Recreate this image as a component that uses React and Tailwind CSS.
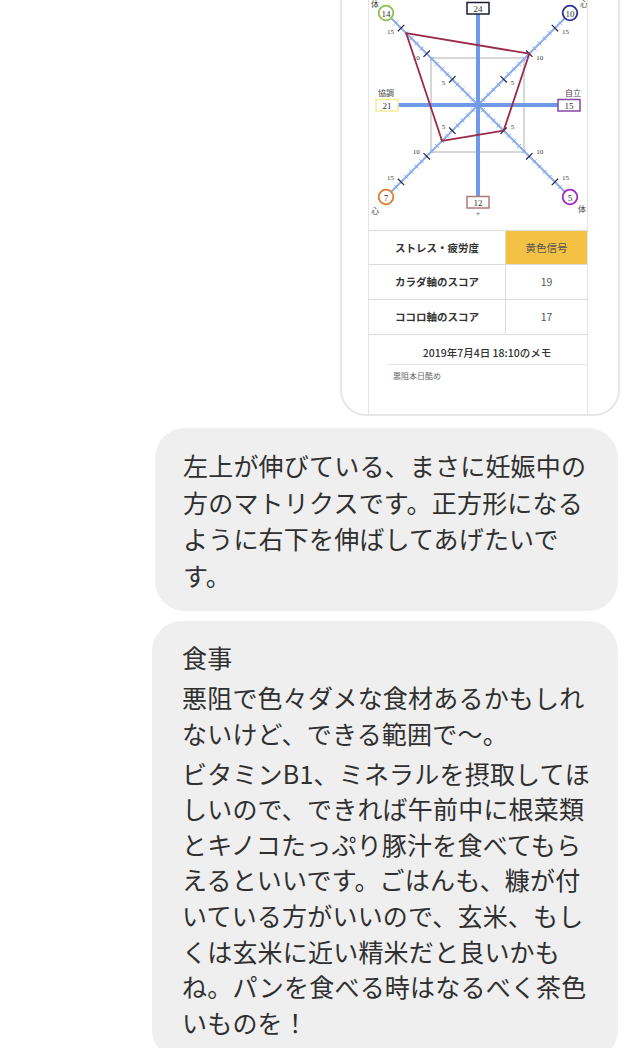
import React from 'react';

const CX = 478;
const CY = 105;
const U = 5.13;

const diagonals = [
  { sx: -1, sy: -1, circle: { x: 386, y: 13, value: '14', color: '#8cc04a' } },
  { sx: 1, sy: -1, circle: { x: 570, y: 13, value: '10', color: '#2f3190' } },
  { sx: -1, sy: 1, circle: { x: 386, y: 197, value: '7', color: '#df7d2c' } },
  { sx: 1, sy: 1, circle: { x: 570, y: 197, value: '5', color: '#a327bf' } },
];

const scores = [
  { sx: -1, sy: -1, v: 14 },
  { sx: 1, sy: -1, v: 10 },
  { sx: 1, sy: 1, v: 5 },
  { sx: -1, sy: 1, v: 7 },
];

function Axis({ sx, sy, circle }) {
  const k = Math.SQRT1_2;
  const px = -sy * k;
  const py = sx * k;
  const endX = circle.x - sx * 5.5;
  const endY = circle.y - sy * 5.5;
  const ticks = [];
  for (let i = 1; i <= 17; i++) {
    const x = CX + sx * i * U;
    const y = CY + sy * i * U;
    const major = i % 5 === 0;
    const h = major ? 4.5 : 2.8;
    ticks.push(
      <line
        key={i}
        x1={x - px * h}
        y1={y - py * h}
        x2={x + px * h}
        y2={y + py * h}
        stroke={major ? '#1f2340' : '#88aaee'}
        strokeWidth={major ? 1.2 : 1}
      />
    );
    if (major) {
      ticks.push(
        <text
          key={'l' + i}
          x={x + sx * 7}
          y={y - sy * 4}
          fontSize="7"
          fill="#333"
          textAnchor={sx < 0 ? 'end' : 'start'}
          dominantBaseline="central"
        >
          {i}
        </text>
      );
    }
  }
  return (
    <g>
      <line x1={CX} y1={CY} x2={endX} y2={endY} stroke="#8cadee" strokeWidth="2" />
      {ticks}
      <circle cx={circle.x} cy={circle.y} r="7.3" fill="white" stroke={circle.color} strokeWidth="1.8" />
      <text x={circle.x} y={circle.y + 0.5} fontSize="9" fill="#333" textAnchor="middle" dominantBaseline="central">
        {circle.value}
      </text>
    </g>
  );
}

function Box({ x, y, value, color }) {
  return (
    <g>
      <rect x={x} y={y} width="22" height="11.5" fill="white" stroke={color} strokeWidth="1.5" />
      <text x={x + 11} y={y + 6} fontSize="9" fill="#333" textAnchor="middle" dominantBaseline="central">
        {value}
      </text>
    </g>
  );
}

function Chart() {
  const poly = scores.map((s) => `${CX + s.sx * s.v * U},${CY + s.sy * s.v * U}`).join(' ');
  return (
    <svg
      width="218"
      height="230"
      viewBox="369 0 218 230"
      className="block"
      style={{ fontFamily: '"Liberation Serif", "Noto Sans CJK JP", serif' }}
    >
      <rect x="431" y="58" width="93" height="94" fill="none" stroke="#b0b0b0" strokeWidth="1" />
      <line x1={CX} y1="14" x2={CX} y2="197" stroke="#7099ea" strokeWidth="4" />
      <line x1="398" y1={CY} x2="558" y2={CY} stroke="#7099ea" strokeWidth="4" />
      {diagonals.map((d, i) => (
        <Axis key={i} {...d} />
      ))}
      <circle cx={CX} cy={CY} r="3" fill="#7099ea" />
      <polygon points={poly} fill="none" stroke="#9a2a48" strokeWidth="1.8" strokeLinejoin="round" />
      <Box x={467} y={2.5} value="24" color="#1c1c30" />
      <Box x={467} y={196.5} value="12" color="#b27a78" />
      <Box x={376} y={99.5} value="21" color="#f2ee98" />
      <Box x={558} y={99.5} value="15" color="#8a44a6" />
      <text x="386" y="93" fontSize="8" fill="#444" textAnchor="middle" dominantBaseline="central">協調</text>
      <text x="573" y="93" fontSize="8" fill="#444" textAnchor="middle" dominantBaseline="central">自立</text>
      <text x="375" y="4" fontSize="8" fill="#444" textAnchor="middle" dominantBaseline="central">体</text>
      <text x="584" y="4" fontSize="8" fill="#444" textAnchor="middle" dominantBaseline="central">心</text>
      <text x="375" y="211" fontSize="8" fill="#444" textAnchor="middle" dominantBaseline="central">心</text>
      <text x="582" y="209" fontSize="8" fill="#444" textAnchor="middle" dominantBaseline="central">体</text>
      <text x={CX} y="213" fontSize="8" fill="#555" textAnchor="middle" dominantBaseline="central">+</text>
    </svg>
  );
}

const tableRows = [
  { label: 'ストレス・疲労度', value: '黄色信号', h: 'h-[34px]', yellow: true },
  { label: 'カラダ軸のスコア', value: '19', h: 'h-[35px]' },
  { label: 'ココロ軸のスコア', value: '17', h: 'h-[35px]' },
];

const firstMessage = [
  '左上が伸びている、まさに妊娠中の',
  '方のマトリクスです。正方形になる',
  'ように右下を伸ばしてあげたいで',
  'す。',
];

const secondMessage = [
  ['食事'],
  ['悪阻で色々ダメな食材あるかもしれ', 'ないけど、できる範囲で〜。'],
  [
    'ビタミンB1、ミネラルを摂取してほ',
    'しいので、できれば午前中に根菜類',
    'とキノコたっぷり豚汁を食べてもら',
    'えるといいです。ごはんも、糠が付',
    'いている方がいいので、玄米、もし',
    'くは玄米に近い精米だと良いかも',
    'ね。パンを食べる時はなるべく茶色',
    'いものを！',
  ],
];

export default function App() {
  return (
    <div className="w-[640px] h-[1048px] overflow-hidden bg-white font-['Noto_Sans_CJK_JP','Noto_Sans',sans-serif] text-[#303030]">
      <div className="flex flex-col items-end">
        {/* shared screenshot bubble */}
        <div className="mr-[20px] w-[280px] h-[416px] border-x-2 border-b-2 border-[#e7e7e7] rounded-b-[26px] pl-[26px] bg-white">
          <div className="w-[220px] h-full border-x border-[#e4e4e4] flex flex-col">
            <Chart />
            <div className="border-b border-[#dcdcdc]">
              {tableRows.map((r) => (
                <div key={r.label} className={`flex ${r.h} border-t border-[#dcdcdc]`}>
                  <div className="w-[137px] border-r border-[#dcdcdc] flex items-center justify-center text-[10.5px] font-bold text-[#333]">
                    {r.label}
                  </div>
                  <div
                    className={`flex-1 flex items-center justify-center text-[10.5px] text-[#555] ${
                      r.yellow ? 'bg-[#f3c143]' : ''
                    }`}
                  >
                    {r.value}
                  </div>
                </div>
              ))}
            </div>
            <div className="ml-[18px]">
              <div className="h-[30px] pt-[6px] flex items-center justify-center text-[10.5px] font-medium text-[#333] border-b border-[#e6e6e6]">
                2019年7月4日 18:10のメモ
              </div>
              <div className="pt-[5px] pl-[6px] text-[8px] leading-[12px] text-[#666]">悪阻本日酷め</div>
            </div>
          </div>
        </div>

        <div className="mt-[12px] mr-[22px] w-[463px] rounded-[30px] bg-[#efefef] pl-[28px] pt-[19px] pb-[17px] text-[25px] leading-[36.7px] tracking-[0.2px]">
          {firstMessage.map((line) => (
            <div key={line} className="whitespace-nowrap">
              {line}
            </div>
          ))}
        </div>

        <div className="mt-[10px] mr-[22px] w-[466px] rounded-[30px] bg-[#efefef] pl-[30px] pt-[19px] pb-[20px] text-[25px] leading-[35.6px] tracking-[0.2px]">
          {secondMessage.map((para, i) => (
            <div key={i} className={i > 0 ? 'mt-[4.5px]' : ''}>
              {para.map((line) => (
                <div key={line} className="whitespace-nowrap">
                  {line}
                </div>
              ))}
            </div>
          ))}
        </div>
      </div>
    </div>
  );
}
